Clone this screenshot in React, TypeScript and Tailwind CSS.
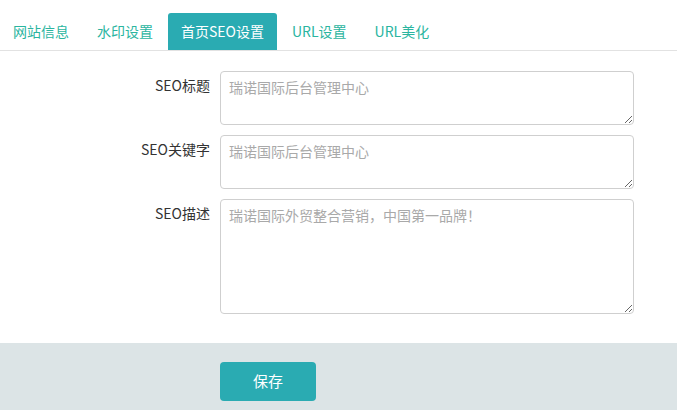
import React from 'react';

const TABS = ['网站信息', '水印设置', '首页SEO设置', 'URL设置', 'URL美化'];
const ACTIVE = 2;

const FIELDS = [
  { label: 'SEO标题', placeholder: '瑞诺国际后台管理中心', h: 'h-[54px]' },
  { label: 'SEO关键字', placeholder: '瑞诺国际后台管理中心', h: 'h-[54px]' },
  { label: 'SEO描述', placeholder: '瑞诺国际外贸整合营销，中国第一品牌！', h: 'h-[115px]' },
];

const font = { fontFamily: '"Microsoft YaHei", "Noto Sans CJK SC", "Liberation Sans", sans-serif' };

export default function App() {
  return (
    <div className="w-[677px] h-[410px] bg-white flex flex-col text-[14px]" style={font}>
      <div className="flex items-end gap-[2px] pt-[13px] border-b border-[#e2e2e2]">
        {TABS.map((t, i) => (
          <div
            key={t}
            className={
              i === ACTIVE
                ? 'h-[37px] px-[13px] flex items-center rounded-t-[3px] bg-[#2aabb2] text-white'
                : 'h-[37px] px-[13px] flex items-center text-[#2bb59f]'
            }
          >
            {t}
          </div>
        ))}
      </div>

      <div className="flex flex-col gap-[10px] pt-[20px] pb-[29px]">
        {FIELDS.map((f) => (
          <div key={f.label} className="flex">
            <label className="w-[210px] shrink-0 text-right pt-[4px] text-[#333]">{f.label}</label>
            <textarea
              placeholder={f.placeholder}
              className={`ml-[10px] w-[414px] ${f.h} border border-[#cfcfcf] rounded-[4px] px-[8px] pt-[5px] text-[14px] placeholder:text-[#a9a9a9] outline-none`}
              style={font}
            />
          </div>
        ))}
      </div>

      <div className="flex-1 bg-[#dce4e6] pt-[19px] pl-[220px]">
        <button className="w-[96px] h-[39px] rounded-[4px] bg-[#2aabb2] text-white text-[15px]">保存</button>
      </div>
    </div>
  );
}
